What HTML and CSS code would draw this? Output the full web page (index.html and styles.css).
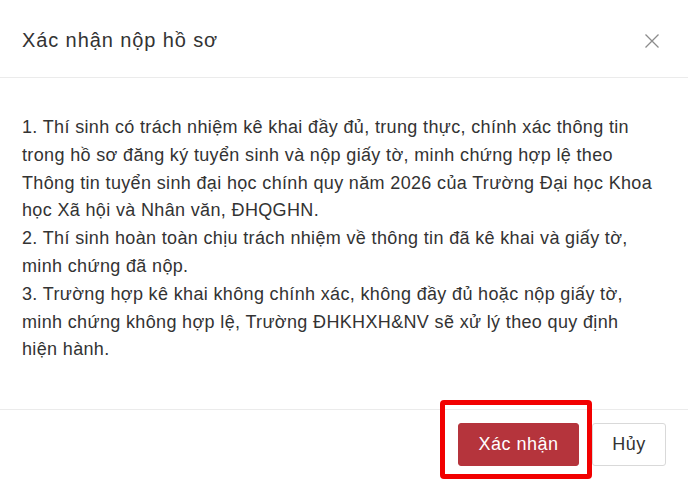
FILE: index.html
```html
<!DOCTYPE html>
<html lang="vi">
<head>
<meta charset="utf-8">
<title>Xác nhận nộp hồ sơ</title>
<link rel="stylesheet" href="styles.css">
</head>
<body>
<div class="modal">
  <div class="modal-header">
    <div class="modal-title">Xác nhận nộp hồ sơ</div>
    <button class="modal-close" aria-label="Close">
      <svg width="16" height="16" viewBox="0 0 16 16"><path d="M1.5 1.5 L14.5 14.5 M14.5 1.5 L1.5 14.5" stroke="#8c8c8c" stroke-width="1.3" fill="none"/></svg>
    </button>
  </div>
  <div class="modal-body">
    <p>1. Thí sinh có trách nhiệm kê khai đầy đủ, trung thực, chính xác thông tin<br>trong hồ sơ đăng ký tuyển sinh và nộp giấy tờ, minh chứng hợp lệ theo<br>Thông tin tuyển sinh đại học chính quy năm 2026 của Trường Đại học Khoa<br>học Xã hội và Nhân văn, ĐHQGHN.</p>
    <p>2. Thí sinh hoàn toàn chịu trách nhiệm về thông tin đã kê khai và giấy tờ,<br>minh chứng đã nộp.</p>
    <p>3. Trường hợp kê khai không chính xác, không đầy đủ hoặc nộp giấy tờ,<br>minh chứng không hợp lệ, Trường ĐHKHXH&amp;NV sẽ xử lý theo quy định<br>hiện hành.</p>
  </div>
  <div class="modal-footer">
    <div class="btn-wrap">
      <button class="btn btn-primary">Xác nhận</button>
      <span class="highlight"></span>
    </div>
    <button class="btn btn-default">Hủy</button>
  </div>
</div>
</body>
</html>
```

FILE: styles.css
```css
html, body {
  margin: 0;
  padding: 0;
  background: #ffffff;
}
body {
  font-family: "Liberation Sans", Arial, sans-serif;
  color: #333333;
}
.modal {
  width: 688px;
  background: #ffffff;
}
.modal-header {
  height: 78px;
  box-sizing: border-box;
  padding: 0 28px 0 22px;
  border-bottom: 1px solid #ebebeb;
  display: flex;
  align-items: center;
  justify-content: space-between;
}
.modal-title {
  font-size: 20px;
  color: #333333;
  letter-spacing: 0.9px;
  padding-top: 4px;
}
.modal-close {
  border: 0;
  background: transparent;
  padding: 0;
  width: 16px;
  height: 16px;
  display: flex;
  margin-top: 4px;
}
.modal-body {
  padding: 36px 22px 45px 22px;
  font-size: 18px;
  line-height: 27.8px;
  letter-spacing: 0.35px;
  color: #333333;
  white-space: nowrap;
}
.modal-body p {
  margin: 0;
}
.modal-footer {
  border-top: 1px solid #ebebeb;
  padding: 13px 22px 25px 0;
  display: flex;
  justify-content: flex-end;
  gap: 13px;
}
.btn-wrap {
  position: relative;
  display: flex;
}
.btn {
  height: 43px;
  box-sizing: border-box;
  border-radius: 3px;
  font-family: "Liberation Sans", Arial, sans-serif;
  font-size: 18px;
  letter-spacing: 0.5px;
  padding: 0;
  cursor: pointer;
}
.btn-primary {
  width: 121px;
  background: #b5343c;
  border: 1px solid #b5343c;
  color: #ffffff;
}
.btn-default {
  width: 74px;
  background: #ffffff;
  border: 1px solid #d9d9d9;
  color: #333333;
}
.highlight {
  position: absolute;
  left: -18px;
  right: -13px;
  top: -23px;
  bottom: -13px;
  border: 5px solid #f20000;
  border-radius: 4px;
  pointer-events: none;
}
```
